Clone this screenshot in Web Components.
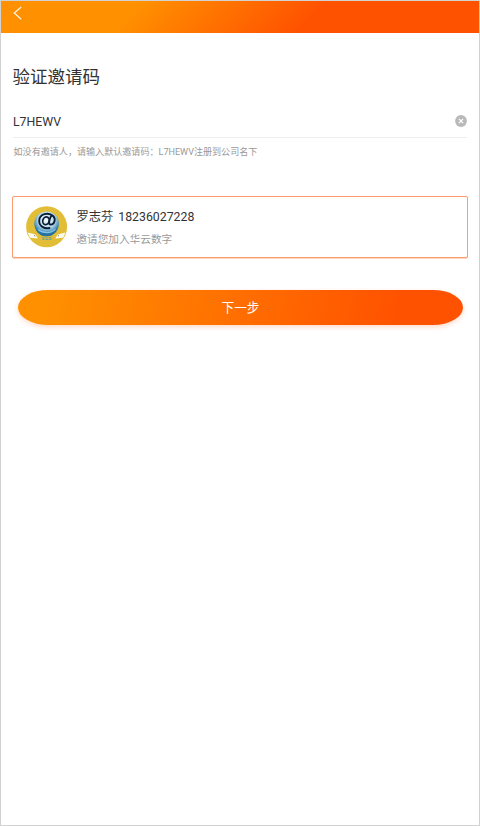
<!DOCTYPE html>
<html lang="zh-CN">
<head>
<meta charset="utf-8">
<title>验证邀请码</title>
<style>
html,body{margin:0;height:100%;background:#fff}
body{font-family:Roboto,"Noto Sans CJK SC",sans-serif;color:#333;overflow:hidden}
</style>
</head>
<body>
<invite-page>
  <nav-bar slot="nav"></nav-bar>
  <page-title>验证邀请码</page-title>
  <code-field hint="如没有邀请人，请输入默认邀请码：L7HEWV注册到公司名下">L7HEWV</code-field>
  <inviter-card><span slot="name">罗志芬</span><span slot="phone">18236027228</span><span slot="message">邀请您加入华云数字</span></inviter-card>
  <next-button>下一步</next-button>
</invite-page>
<script>
function define(name, markup, setup) {
  const template = document.createElement('template');
  template.innerHTML = markup;
  customElements.define(name, class extends HTMLElement {
    constructor() {
      super();
      this.attachShadow({mode: 'open'}).append(template.content.cloneNode(true));
    }
    connectedCallback() { if (setup) setup(this); }
  });
}

define('invite-page', `
<style>
:host{display:flex;flex-direction:column;box-sizing:border-box;width:480px;height:826px;border:1px solid #d2d2d2;background:#fff}
main{display:flex;flex-direction:column;padding:30px 11px 0}
</style>
<slot name="nav"></slot><main><slot></slot></main>`);

define('nav-bar', `
<style>
:host{display:block;box-sizing:border-box;height:32px;flex:none;padding:5px 0 0 11px;background:linear-gradient(135deg,#ff9000 28%,#ff5200 64%)}
svg{display:block}
</style>
<svg width="12" height="15" viewBox="0 0 12 15" fill="none" stroke="#fff3df" stroke-width="1.3"><path d="M9.2 .9 2.3 7.1l6.9 6.1"/></svg>`);

define('page-title', `
<style>:host{display:block;height:28px;padding-left:.5px;font-size:17.5px;line-height:28px;color:#333}</style>
<slot></slot>`);

define('code-field', `
<style>
:host{display:block}
.row{display:flex;align-items:center;justify-content:space-between;height:31px;margin:15px 1px 0;border-bottom:1px solid #eee}
.value{font-size:12.3px;line-height:20px;color:#333}
svg{display:block;margin-bottom:1px}
.hint{margin-left:1.5px;padding-top:6px;font-size:9.07px;line-height:16px;color:#999;white-space:nowrap}
</style>
<div class="row"><span class="value"><slot></slot></span>
<svg width="12" height="12" viewBox="0 0 12 12"><circle cx="6" cy="6" r="5.9" fill="#b9b9b9"/><path d="m3.9 3.9 4.2 4.2m0-4.2L3.9 8.1" stroke="#fff" stroke-width="1.2"/></svg></div>
<div class="hint"></div>`, el => {
  el.shadowRoot.querySelector('.hint').textContent = el.getAttribute('hint');
});

define('user-avatar', `
<style>:host{display:block;width:42px;height:42px;flex:none}svg{display:block}</style>
<svg width="42" height="42" viewBox="0 0 42 42">
<defs><radialGradient id="globe" cx=".5" cy=".34" r=".68"><stop offset="0" stop-color="#f6fcff"/><stop offset=".5" stop-color="#b5d9ea"/><stop offset=".78" stop-color="#3986b6"/><stop offset="1" stop-color="#0a3c62"/></radialGradient></defs>
<circle cx="20.600" cy="20.800" r="20.500" fill="#e2bd38"/>
<circle cx="20.600" cy="17.800" r="12.300" fill="url(#globe)"/>
<path d="M10 22.500c5 6 16 6 21-.5-2 11-19 11-21 .5Z" fill="#26719f"/>
<path d="M12 23.500c5 4.200 13.500 4.200 17.500-.5" fill="none" stroke="#83c5e3" stroke-width="1.200"/>
<g fill="none" stroke="#0b1d36" stroke-linecap="round"><ellipse cx="20" cy="14.800" rx="3.200" ry="3.900" transform="rotate(18 20 14.800)" stroke-width="1.700"/><path stroke-width="1.900" d="M24.800 10.500c-2 4.800-2.400 7.900-.2 8.100 3.700.3 5.700-5.600 2.500-8.600-4.700-4.300-13.700-2-13.900 4.600-.1 5.700 5.300 8.600 10.300 7.400"/></g>
<path d="m1.700 26.600 7.800 1.800 2.400 4.200-8-.8-2.200-5.200Zm37.800 0-7.800 1.800-2.400 4.200 8-.8 2.200-5.200Z" fill="#fffef0"/>
<path d="m8.300 28.900.8 1.600M32.900 28.900l-.8 1.600" stroke="#678" stroke-width=".8"/>
<path d="M16 31.800h2.500m1 0h2m1 0h3m-9 1.500h2m1 0h3m1 0h2" stroke="#639d94" stroke-width="1"/>
</svg>`);

define('inviter-card', `
<style>
:host{display:flex;box-sizing:border-box;width:456px;height:62px;margin-top:36px;padding:9px 0 0 13px;border:1px solid #ff9b70;border-radius:2px;background:#fff;box-shadow:0 .5px 0 #ffad88}
.info{display:flex;flex-direction:column;margin-left:8.4px}
.top{display:flex;gap:5px;font-size:12.3px;line-height:22px;color:#333}
.message{margin-top:1px;font-size:10.65px;line-height:22px;color:#999}
</style>
<user-avatar></user-avatar>
<div class="info"><div class="top"><slot name="name"></slot><slot name="phone"></slot></div><div class="message"><slot name="message"></slot></div></div>`);

define('next-button', `
<style>
:host{display:block;margin:32px 5px 0 6px}
button{display:block;width:445px;height:35px;padding:0;border:0;border-radius:30px / 17.5px;background:linear-gradient(100deg,#ff9000 7%,#ff5200 85%);box-shadow:0 2px 5px rgba(255,82,0,.22);font:12.6px/35px Roboto,"Noto Sans CJK SC",sans-serif;color:#fff}
</style>
<button type="button"><slot></slot></button>`);
</script>
</body>
</html>
